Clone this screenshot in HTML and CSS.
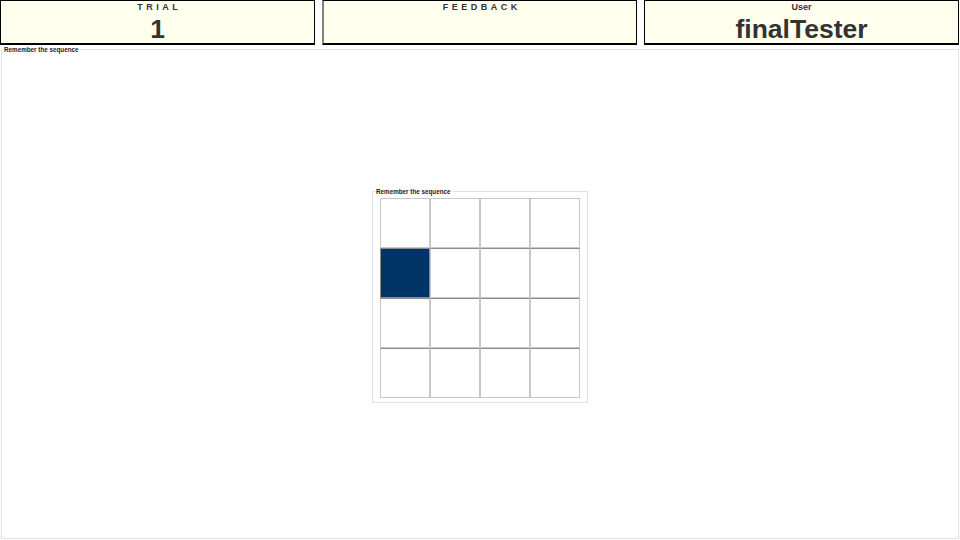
FILE: index.html
```html
<!DOCTYPE html>
<html>
<head>
<meta charset="utf-8">
<link rel="stylesheet" href="styles.css">
</head>
<body>
<div class="header">
  <div class="box">
    <div class="label spaced">TRIAL</div>
    <div class="value">1</div>
  </div>
  <div class="box box-mid">
    <div class="label spaced">FEEDBACK</div>
    <div class="value"></div>
  </div>
  <div class="box">
    <div class="label">User</div>
    <div class="value">finalTester</div>
  </div>
</div>
<fieldset class="outer">
  <legend class="legend">Remember the sequence</legend>
  <div class="stage">
    <fieldset class="inner">
      <legend class="legend">Remember the sequence</legend>
      <div class="grid">
        <div class="cell"></div><div class="cell"></div><div class="cell"></div><div class="cell"></div>
        <div class="cell row2 active"></div><div class="cell row2"></div><div class="cell row2"></div><div class="cell row2"></div>
        <div class="cell row2"></div><div class="cell row2"></div><div class="cell row2"></div><div class="cell row2"></div>
        <div class="cell row2"></div><div class="cell row2"></div><div class="cell row2"></div><div class="cell row2"></div>
      </div>
    </fieldset>
  </div>
</fieldset>
</body>
</html>
```

FILE: styles.css
```css
html, body {
  margin: 0;
  padding: 0;
  background: #ffffff;
  font-family: "Liberation Sans", Arial, sans-serif;
  color: #333333;
}
.header {
  display: flex;
  gap: 7px;
  height: 45px;
}
.box {
  width: 315px;
  height: 45px;
  box-sizing: border-box;
  border: 1px solid #000000;
  border-bottom-width: 2px;
  background: #ffffee;
  display: flex;
  flex-direction: column;
  align-items: center;
}
.box-mid {
  border-left: 2px solid #808080;
}
.label {
  font-size: 9px;
  font-weight: bold;
  line-height: 10px;
  margin-top: 1px;
}
.spaced {
  letter-spacing: 3.5px;
  margin-right: -3.5px;
}
.value {
  font-size: 26.5px;
  font-weight: bold;
  line-height: 28px;
  margin-top: 3px;
}
.outer {
  margin: 1px 1px 0 1px;
  padding: 0;
  border: 1px solid #dbe4ee;
  height: 493px;
  box-sizing: border-box;
  min-width: 0;
}
.legend {
  font-size: 6.3px;
  line-height: 7px;
  padding: 0 1px;
  margin-left: 1px;
  color: #1a1a1a;
  font-weight: bold;
}
.stage {
  height: 485px;
  display: flex;
  align-items: center;
  justify-content: center;
}
.inner {
  margin: 0;
  padding: 3px 7px 4px 7px;
  border: 1px solid #dbe4ee;
  min-width: 0;
}
.inner .legend {
  margin-left: -5px;
}
.grid {
  display: grid;
  grid-template-columns: repeat(4, 50px);
  grid-template-rows: repeat(4, 50px);
}
.cell {
  box-sizing: border-box;
  border: 1px solid #c8c8c8;
  background: #ffffff;
}
.row2 {
  border-top-color: #8c8c8c;
}
.active {
  background: #003366;
  border-color: #8c8c8c;
}
```
